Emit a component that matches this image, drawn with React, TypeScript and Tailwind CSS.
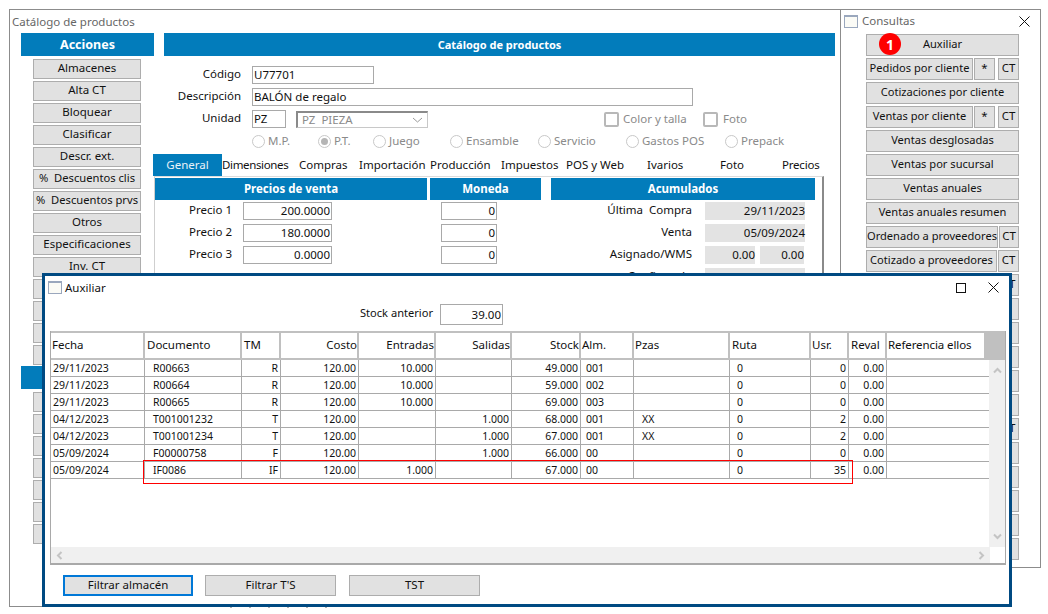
const ACTIONS_TOP = ['Almacenes', 'Alta CT', 'Bloquear', 'Clasificar', 'Descr. ext.', '%  Descuentos clis', '%  Descuentos prvs', 'Otros', 'Especificaciones', 'Inv. CT', '', '', '', ''];
const ACTIONS_BOTTOM = ['', '', '', '', '', '', ''];

const TABS = [
  { label: 'Dimensiones', width: 'w-[77px] tracking-[-0.35px]' },
  { label: 'Compras', width: 'w-[60px]' },
  { label: 'Importación', width: 'w-[71px]' },
  { label: 'Producción', width: 'w-[71px]' },
  { label: 'Impuestos', width: 'w-[65px]' },
  { label: 'POS y Web', width: 'w-[81px]' },
  { label: 'Ivarios', width: 'w-[73px]' },
  { label: 'Foto', width: 'w-[62px]' },
  { label: 'Precios', width: 'w-[50px] tracking-[-0.2px]' },
];

const RADIOS = [
  { label: 'M.P.', width: 'w-[66px]' },
  { label: 'P.T.', width: 'w-[55px]', checked: true },
  { label: 'Juego', width: 'w-[77px]' },
  { label: 'Ensamble', width: 'w-[88px]' },
  { label: 'Servicio', width: 'w-[88px]' },
  { label: 'Gastos POS', width: 'w-[99px]' },
  { label: 'Prepack', width: 'w-[70px]' },
];

const CONSULTAS = [
  { label: 'Auxiliar' },
  { label: 'Pedidos por cliente', star: true, ct: true },
  { label: 'Cotizaciones por cliente' },
  { label: 'Ventas por cliente', star: true, ct: true },
  { label: 'Ventas desglosadas' },
  { label: 'Ventas por sucursal' },
  { label: 'Ventas anuales' },
  { label: 'Ventas anuales resumen' },
  { label: 'Ordenado a proveedores', ct: true },
  { label: 'Cotizado a proveedores', ct: true },
  { label: '', ct: true },
  { label: '' },
  { label: '' },
  { label: '' },
  { label: '' },
  { label: '' },
  { label: '', ct: true },
  { label: '' },
  { label: '' },
  { label: '' },
  { label: '' },
  { label: '' },
];

const COLUMNS = [
  { head: 'Fecha', width: 'w-[94px]', headAlign: 'pl-[1px]', cell: 'text-left pl-[2px]' },
  { head: 'Documento', width: 'w-[97px]', headAlign: 'pl-[2px]', cell: 'text-left pl-[8px]' },
  { head: 'TM', width: 'w-[39px]', headAlign: 'pl-[2px]', cell: 'text-right pr-[2px]' },
  { head: 'Costo', width: 'w-[78px]', headAlign: 'justify-end', cell: 'text-right pr-[2px]' },
  { head: 'Entradas', width: 'w-[77px]', headAlign: 'justify-end', cell: 'text-right pr-[2px]' },
  { head: 'Salidas', width: 'w-[76px]', headAlign: 'justify-end', cell: 'text-right pr-[2px]' },
  { head: 'Stock', width: 'w-[69px]', headAlign: 'justify-end', cell: 'text-right pr-[2px]' },
  { head: 'Alm.', width: 'w-[53px]', headAlign: 'pl-[1px]', cell: 'text-left pl-[5px]' },
  { head: 'Pzas', width: 'w-[96px]', headAlign: 'pl-[1px]', cell: 'text-left pl-[8px]' },
  { head: 'Ruta', width: 'w-[81px]', headAlign: 'pl-[2px]', cell: 'text-left pl-[7px]' },
  { head: 'Usr.', width: 'w-[38px]', headAlign: 'pl-[1px]', cell: 'text-right pr-[2px]' },
  { head: 'Reval', width: 'w-[38px]', headAlign: 'pl-[2px]', cell: 'text-right pr-[2px]' },
  { head: 'Referencia ellos', width: 'w-[99px]', headAlign: 'pl-[1px] tracking-[-0.1px]', cell: 'text-left' },
];

const ROWS = [
  ['29/11/2023', 'R00663', 'R', '120.00', '10.000', '', '49.000', '001', '', '0', '0', '0.00', ''],
  ['29/11/2023', 'R00664', 'R', '120.00', '10.000', '', '59.000', '002', '', '0', '0', '0.00', ''],
  ['29/11/2023', 'R00665', 'R', '120.00', '10.000', '', '69.000', '003', '', '0', '0', '0.00', ''],
  ['04/12/2023', 'T001001232', 'T', '120.00', '', '1.000', '68.000', '001', 'XX', '0', '2', '0.00', ''],
  ['04/12/2023', 'T001001234', 'T', '120.00', '', '1.000', '67.000', '001', 'XX', '0', '2', '0.00', ''],
  ['05/09/2024', 'F00000758', 'F', '120.00', '', '1.000', '66.000', '00', '', '0', '0', '0.00', ''],
  ['05/09/2024', 'IF0086', 'IF', '120.00', '1.000', '', '67.000', '00', '', '0', '35', '0.00', ''],
];

const GrayButton = ({
  label,
  className = '',
  textSize = 'text-[11.5px]',
  border = 'border border-[#adadad]',
}: {
  label: string;
  className?: string;
  textSize?: string;
  border?: string;
}) => (
  <div className={`flex items-center justify-center whitespace-pre bg-[#e1e1e1] pb-[2px] leading-none text-[#111] ${border} ${textSize} ${className}`}>
    {label}
  </div>
);

const BlueHeader = ({ label, className = 'h-[22px] text-[11.5px]' }: { label: string; className?: string }) => (
  <div className={`flex items-center justify-center bg-[#027cbb] font-bold text-white ${className}`}>{label}</div>
);

const Field = ({ value, className = '' }: { value: string; className?: string }) => (
  <div className={`h-[18px] overflow-hidden whitespace-nowrap border border-[#a9a9a9] bg-white px-[1px] text-[11.5px] leading-[16px] text-[#111] ${className}`}>{value}</div>
);

const WindowIcon = () => (
  <div className="h-[13px] w-[14px] border border-[#9aa7bd] border-t-2 bg-[#fbfbf6]" />
);

const CloseIcon = () => (
  <svg width="11" height="11" viewBox="0 0 11 11" fill="none" stroke="#111" strokeWidth="1">
    <path d="M0.5 0.5 L10.5 10.5 M10.5 0.5 L0.5 10.5" />
  </svg>
);

const Chevron = ({ d }: { d: string }) => (
  <svg width="9" height="9" viewBox="0 0 9 9" fill="none" stroke="#c4c4c4" strokeWidth="2">
    <path d={d} />
  </svg>
);

const Radio = ({ label, width, checked }: { label: string; width: string; checked?: boolean }) => (
  <div className={`flex items-center gap-[3px] text-[11.5px] text-[#8a8a8a] ${width}`}>
    <div className="flex h-[13px] w-[13px] items-center justify-center rounded-full border border-[#c8c8c8] bg-white">
      {checked && <div className="h-[7px] w-[7px] rounded-full bg-[#b5b5b5]" />}
    </div>
    {label}
  </div>
);

const FormLabel = ({ label }: { label: string }) => (
  <span className="w-[77px] pb-[2px] text-right leading-[14px]">{label}</span>
);

const AcumuladoRow = ({ label, children }: { label: string; children: React.ReactNode }) => (
  <div className="flex h-[18px] items-center">
    <span className="w-[141px] whitespace-pre pb-[2px] text-right leading-[14px]">{label}</span>
    {children}
  </div>
);

const CatalogWindow = () => (
  <div className="absolute left-[9px] top-[9px] h-[598px] w-[832px] overflow-hidden border border-[#8c8c8c] bg-white">
    <div className="flex h-[23px] items-center pl-[2px] pt-[1px] text-[11.5px] text-[#666]">Catálogo de productos</div>
    <div className="flex gap-[10px] pl-[11px]">
      <div className="w-[133px]">
        <BlueHeader label="Acciones" className="h-[23px] pt-[2px] text-[12.5px]" />
        <div className="ml-[12px] mt-[3px] flex w-[108px] flex-col gap-[2px]">
          {ACTIONS_TOP.map((label, i) => (
            <GrayButton key={i} label={label} className="h-[20px] shrink-0" textSize={label.startsWith('%') ? 'text-[11.2px]' : 'text-[11.5px]'} />
          ))}
        </div>
        <div className="mt-[1px] h-[23px] bg-[#027cbb]" />
        <div className="ml-[12px] mt-[3px] flex w-[108px] flex-col gap-[2px]">
          {ACTIONS_BOTTOM.map((label, i) => (
            <GrayButton key={i} label={label} className="h-[20px] shrink-0" />
          ))}
        </div>
      </div>

      <div className="w-[671px]">
        <BlueHeader label="Catálogo de productos" className="h-[23px] pt-[1px] text-[11px]" />

        <div className="mt-[10px] flex flex-col gap-[4px] text-[11.5px] text-[#111]">
          <div className="flex h-[18px] items-center">
            <FormLabel label="Código" />
            <Field value="U77701" className="ml-[11px] w-[122px]" />
          </div>
          <div className="flex h-[18px] items-center">
            <FormLabel label="Descripción" />
            <Field value="BALÓN de regalo" className="ml-[11px] w-[441px]" />
          </div>
          <div className="flex h-[18px] items-center">
            <FormLabel label="Unidad" />
            <Field value="PZ" className="ml-[11px] w-[34px]" />
            <div className="ml-[10px] flex h-[17px] w-[132px] items-center justify-between whitespace-pre border border-[#c8c8c8] border-l-2 border-t-2 border-l-[#8a8a8a] border-t-[#8a8a8a] pl-[4px] pr-[4px] text-[#8a8a8a]">
              {'PZ  PIEZA'}
              <svg width="11" height="6" viewBox="0 0 11 6" fill="none" stroke="#9a9a9a" strokeWidth="1">
                <path d="M1 1 L5.5 5 L10 1" />
              </svg>
            </div>
            <div className="ml-[176px] flex w-[99px] items-center gap-[4px] text-[#8a8a8a]">
              <div className="h-[15px] w-[15px] rounded-[2px] border-2 border-[#b8b8b8]" />
              Color y talla
            </div>
            <div className="flex items-center gap-[5px] text-[#8a8a8a]">
              <div className="h-[15px] w-[15px] rounded-[2px] border-2 border-[#b8b8b8]" />
              Foto
            </div>
          </div>
        </div>

        <div className="ml-[88px] mt-[6px] flex h-[14px] items-center">
          {RADIOS.map((radio) => (
            <Radio key={radio.label} {...radio} />
          ))}
        </div>

        <div className="-ml-[11px] mt-[5px] flex h-[23px] items-center text-[11.5px] text-[#111]">
          <div className="flex h-[22px] w-[69px] items-center justify-center bg-[#027cbb] text-[#e8f2f8]">General</div>
          {TABS.map((tab) => (
            <span key={tab.label} className={`whitespace-nowrap ${tab.width}`}>
              {tab.label}
            </span>
          ))}
        </div>

        <div className="-ml-[10px] flex h-[110px] w-[670px] gap-[3px] border-l border-r-2 border-t border-l-[#cfcfcf] border-r-[#8a8a8a] border-t-[#dcdcdc] pt-[1px] text-[11.5px] text-[#111]">
          <div className="w-[272px]">
            <BlueHeader label="Precios de venta" />
            <div className="mt-[2px] flex flex-col gap-[4px]">
              {['200.0000', '180.0000', '0.0000'].map((price, i) => (
                <div key={i} className="flex h-[18px] items-center">
                  <FormLabel label={`Precio ${i + 1}`} />
                  <Field value={price} className="ml-[11px] w-[89px] text-right" />
                </div>
              ))}
            </div>
          </div>
          <div className="w-[111px]">
            <BlueHeader label="Moneda" />
            <div className="ml-[11px] mt-[2px] flex w-[56px] flex-col gap-[4px]">
              <Field value="0" className="text-right" />
              <Field value="0" className="text-right" />
              <Field value="0" className="text-right" />
            </div>
          </div>
          <div className="ml-[7px] w-[264px]">
            <BlueHeader label="Acumulados" />
            <div className="mt-[2px] flex flex-col gap-[4px]">
              <AcumuladoRow label="Última  Compra">
                <div className="ml-[13px] h-[18px] w-[100px] bg-[#e3e3e3] text-right leading-[18px]">29/11/2023</div>
              </AcumuladoRow>
              <AcumuladoRow label="Venta">
                <div className="ml-[13px] h-[18px] w-[100px] bg-[#e3e3e3] text-right leading-[18px]">05/09/2024</div>
              </AcumuladoRow>
              <AcumuladoRow label="Asignado/WMS">
                <div className="ml-[13px] h-[18px] w-[50px] bg-[#e3e3e3] text-right leading-[18px]">0.00</div>
                <div className="ml-[5px] h-[18px] w-[44px] bg-[#e3e3e3] text-right leading-[18px]">0.00</div>
              </AcumuladoRow>
              <AcumuladoRow label="Confirmado">
                <div className="ml-[13px] h-[18px] w-[100px] bg-[#e3e3e3] text-right leading-[18px]">0.000</div>
              </AcumuladoRow>
            </div>
          </div>
        </div>
      </div>
    </div>
  </div>
);

const ConsultasWindow = () => (
  <div className="absolute left-[840px] top-[9px] h-[559px] w-[201px] border border-[#8c8c8c] bg-white">
    <div className="flex h-[24px] items-center pb-[2px] pl-[3px] pr-[10px] text-[11.5px] text-[#666]">
      <WindowIcon />
      <span className="ml-[4px]">Consultas</span>
      <span className="ml-auto">
        <CloseIcon />
      </span>
    </div>
    <div className="ml-[25px] flex w-[153px] flex-col gap-[2px]">
      {CONSULTAS.map((row, i) => (
        <div key={i} className="relative flex h-[22px] shrink-0 gap-[1px]">
          <GrayButton label={row.label} className="flex-1" textSize="text-[11.1px]" />
          {row.star && <GrayButton label="*" className="mr-[2px] w-[21px]" />}
          {row.ct && <GrayButton label="CT" className="w-[21px]" />}
          {i === 0 && (
            <div className="absolute -top-[1px] left-[13px] flex h-[22px] w-[22px] items-center justify-center rounded-full bg-[#fe0000] text-[14px] font-bold text-white">
              1
            </div>
          )}
        </div>
      ))}
    </div>
  </div>
);

const AuxiliarWindow = () => (
  <div className="absolute left-[42px] top-[273px] h-[334px] w-[970px] border-[3px] border-[#004a82] bg-white">
    <div className="flex h-[28px] items-center pb-[5px] pl-[3px] text-[11.5px] text-[#111]">
      <WindowIcon />
      <span className="ml-[3px]">Auxiliar</span>
      <div className="ml-auto mr-[10px] flex items-center gap-[22px]">
        <div className="h-[10px] w-[10px] border border-[#111]" />
        <CloseIcon />
      </div>
    </div>

    <div className="flex h-[21px] items-center text-[11.5px] text-[#111]">
      <span className="w-[388px] pb-[3px] text-right text-[11.1px]">Stock anterior</span>
      <div className="ml-[7px] h-[21px] w-[63px] border border-[#a9a9a9] pr-[1px] text-right leading-[20px]">39.00</div>
    </div>

    <div className="relative ml-[5px] mt-[6px] h-[234px] w-[956px] overflow-hidden border-b-2 border-l border-r border-[#a9a9a9]">
      <div className="flex h-[29px] bg-[#c0c0c0] py-[2px] text-[11.5px] text-[#111]">
        {COLUMNS.map((col) => (
          <div key={col.head} className={`flex shrink-0 items-center whitespace-nowrap border-r-2 border-[#c0c0c0] bg-white pb-[2px] ${col.width} ${col.headAlign}`}>
            {col.head}
          </div>
        ))}
      </div>
      <div className="flex h-[187px]">
        <div className="w-[938px] text-[10.5px] text-[#111]">
          {ROWS.map((row, r) => (
            <div key={r} className="flex h-[17px] border-b border-[#a9a9a9] leading-[16px]">
              {row.map((value, c) => (
                <div key={c} className={`shrink-0 whitespace-nowrap ${COLUMNS[c].width} ${COLUMNS[c].cell} ${c < row.length - 1 ? 'border-r border-[#a9a9a9]' : ''}`}>
                  {value}
                </div>
              ))}
            </div>
          ))}
        </div>
        <div className="ml-auto flex w-[16px] flex-col items-center justify-between bg-[#f0f0f0] py-[6px]">
          <Chevron d="M1 6.5 L4.5 3 L8 6.5" />
          <Chevron d="M1 2.5 L4.5 6 L8 2.5" />
        </div>
      </div>
      <div className="flex h-[16px]">
        <div className="flex w-[939px] items-center justify-between bg-[#f0f0f0] px-[4px]">
          <Chevron d="M6.5 1 L3 4.5 L6.5 8" />
          <Chevron d="M2.5 1 L6 4.5 L2.5 8" />
        </div>
      </div>
      <div className="absolute left-[92px] top-[129px] z-10 h-[24px] w-[710px] outline outline-1 -outline-offset-1 outline-[#ff0000]" />
    </div>

    <div className="ml-[18px] mt-[10px] flex">
      <GrayButton label="Filtrar almacén" className="h-[21px] w-[130px]" border="border-2 border-[#0078d7]" />
      <GrayButton label="Filtrar T'S" className="ml-[12px] h-[21px] w-[131px]" />
      <GrayButton label="TST" className="ml-[13px] h-[21px] w-[131px]" />
    </div>
  </div>
);

const App = () => (
  <div className="relative h-[614px] w-[1048px] overflow-hidden bg-white font-['Noto_Sans',sans-serif]">
    <CatalogWindow />
    <ConsultasWindow />
    <AuxiliarWindow />
    <div className="absolute left-[230px] top-[607px] flex gap-[17px]">
      {[0, 1, 2, 3, 4, 5].map((i) => (
        <div key={i} className="h-[1px] w-[2px] bg-[#b0b0b0]" />
      ))}
    </div>
  </div>
);

export default App;
